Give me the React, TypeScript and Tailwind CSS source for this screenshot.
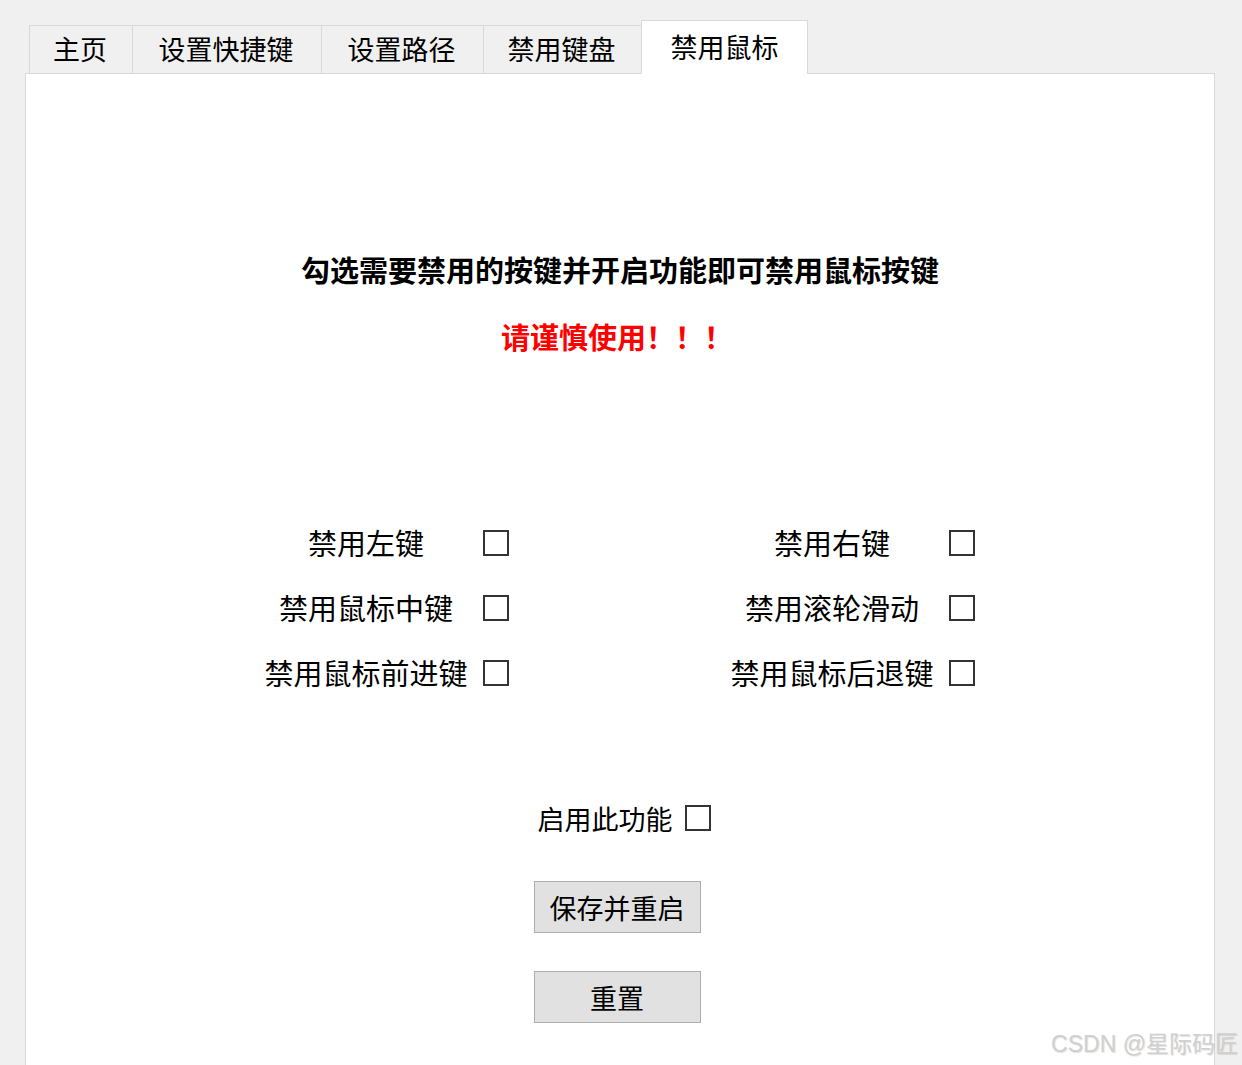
import React from "react";

const font = { fontFamily: '"Noto Sans CJK SC", "Noto Sans", sans-serif' };

function Box() {
  return <div className="w-[26px] h-[26px] border-2 border-[#333333] bg-white shrink-0" />;
}

const tabs = [
  { label: "主页", w: "w-[103px]" },
  { label: "设置快捷键", w: "w-[189px]" },
  { label: "设置路径", w: "w-[162px]" },
  { label: "禁用键盘", w: "w-[158px]" },
];

const rows: [string, string][] = [
  ["禁用左键", "禁用右键"],
  ["禁用鼠标中键", "禁用滚轮滑动"],
  ["禁用鼠标前进键", "禁用鼠标后退键"],
];

function Item({ label }: { label: string }) {
  return (
    <div className="flex items-center h-[65px]">
      <div className="w-[210px] flex justify-center text-[29px] leading-none">{label}</div>
      <div className="ml-[12px]">
        <Box />
      </div>
    </div>
  );
}

export default function App() {
  return (
    <div className="relative w-[1242px] h-[1065px] overflow-hidden bg-[#f0f0f0] text-black" style={font}>
      <div className="pt-[20px] pl-[25px]">
        <div className="flex items-end pl-[4px] h-[53px]">
          {tabs.map((t) => (
            <div
              key={t.label}
              className={`${t.w} h-[48px] flex items-center justify-center border-t border-l border-[#d9d9d9] text-[27px] leading-none pb-[2px] pr-[2px]`}
            >
              {t.label}
            </div>
          ))}
          <div className="w-[167px] h-[54px] -mb-[1px] relative z-10 bg-white border border-b-0 border-[#d9d9d9] flex items-center justify-center text-[27px] leading-none pb-[2px]">
            禁用鼠标
          </div>
        </div>
        <div className="w-[1190px] h-[1100px] bg-white border border-[#d9d9d9]">
          <div className="mt-[175px] h-[40px] leading-[40px] text-center font-bold text-[29px]">
            勾选需要禁用的按键并开启功能即可禁用鼠标按键
          </div>
          <div className="mt-[27px] h-[40px] leading-[40px] text-center font-bold text-[29px] text-[#ff0000] pr-[6px]">
            请谨慎使用！！！
          </div>
          <div className="mt-[154px] ml-[235px] grid grid-cols-[248px_466px]">
            {rows.map(([a, b]) => (
              <React.Fragment key={a}>
                <Item label={a} />
                <div className="pl-[218px]">
                  <Item label={b} />
                </div>
              </React.Fragment>
            ))}
          </div>
          <div className="mt-[93px] h-[40px] flex items-center justify-center gap-[12px] pl-[8px]">
            <span className="text-[27px] leading-none">启用此功能</span>
            <Box />
          </div>
          <div className="mt-[43px] flex justify-center pr-[6px]">
            <div className="w-[167px] h-[52px] bg-[#e1e1e1] border border-[#adadad] flex items-center justify-center text-[27px] leading-none">
              保存并重启
            </div>
          </div>
          <div className="mt-[38px] flex justify-center pr-[6px]">
            <div className="w-[167px] h-[52px] bg-[#e1e1e1] border border-[#adadad] flex items-center justify-center text-[27px] leading-none">
              重置
            </div>
          </div>
        </div>
      </div>
      <div
        className="absolute right-[4px] bottom-[9px] text-[23px] leading-none text-[#d0d0d0]"
        style={{ textShadow: "1px 1px 1px rgba(0,0,0,0.12)", fontFamily: '"Liberation Sans", "Noto Sans CJK SC", sans-serif' }}
      >
        CSDN @星际码匠
      </div>
    </div>
  );
}
